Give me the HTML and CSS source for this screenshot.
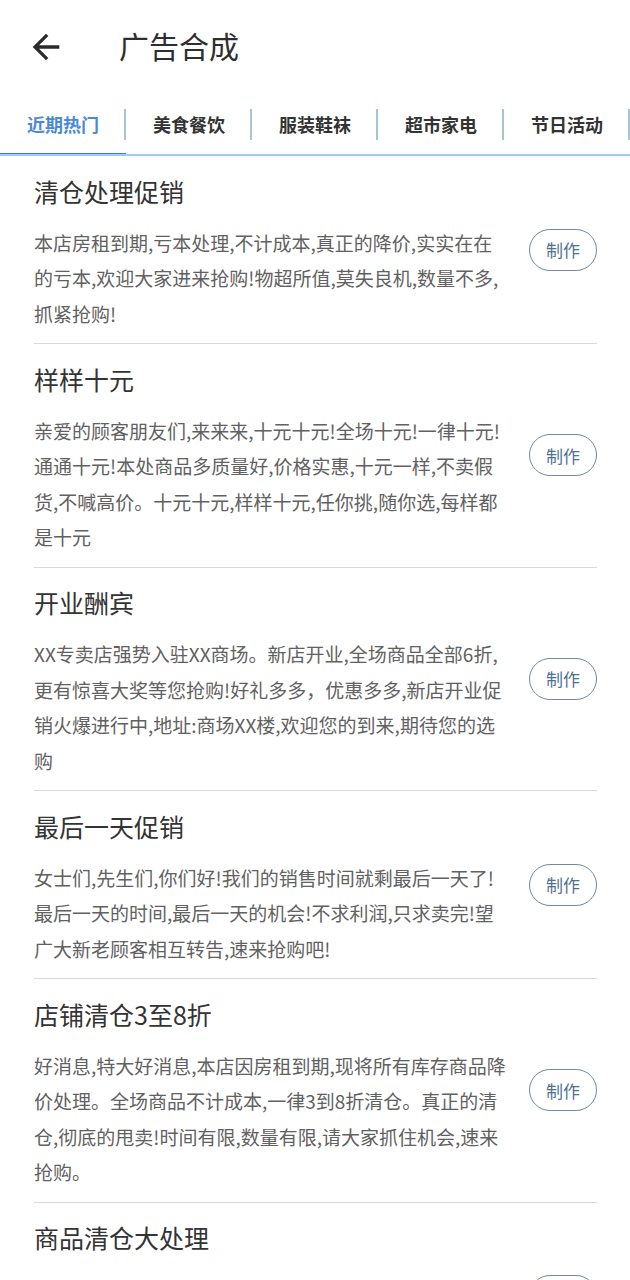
FILE: index.html
```html
<!DOCTYPE html>
<html lang="zh">
<head>
<meta charset="utf-8">
<title>广告合成</title>
<link rel="stylesheet" href="styles.css">
</head>
<body>
<div class="page">
  <header class="header">
    <svg class="back" viewBox="0 0 24 24" width="40" height="40"><path d="M20 11H7.83l5.59-5.59L12 4l-8 8 8 8 1.41-1.41L7.83 13H20v-2z" fill="#2b2b2b"/></svg>
    <h1 class="title">广告合成</h1>
  </header>
  <nav class="tabs">
    <div class="tab active">近期热门</div>
    <div class="tab">美食餐饮</div>
    <div class="tab">服装鞋袜</div>
    <div class="tab">超市家电</div>
    <div class="tab">节日活动</div>
    <div class="tab">婚庆喜事</div>
  </nav>
  <main class="list">
    <div class="item">
      <div class="body">
        <div class="name">清仓处理促销</div>
        <p class="desc">本店房租到期,亏本处理,不计成本,真正的降价,实实在在的亏本,欢迎大家进来抢购!物超所值,莫失良机,数量不多,抓紧抢购!</p>
      </div>
      <button class="make">制作</button>
    </div>
    <div class="item">
      <div class="body">
        <div class="name">样样十元</div>
        <p class="desc">亲爱的顾客朋友们,来来来,十元十元!全场十元!一律十元!通通十元!本处商品多质量好,价格实惠,十元一样,不卖假货,不喊高价。十元十元,样样十元,任你挑,随你选,每样都是十元</p>
      </div>
      <button class="make">制作</button>
    </div>
    <div class="item">
      <div class="body">
        <div class="name">开业酬宾</div>
        <p class="desc">XX专卖店强势入驻XX商场。新店开业,全场商品全部6折,更有惊喜大奖等您抢购!好礼多多，优惠多多,新店开业促销火爆进行中,地址:商场XX楼,欢迎您的到来,期待您的选购</p>
      </div>
      <button class="make">制作</button>
    </div>
    <div class="item">
      <div class="body">
        <div class="name">最后一天促销</div>
        <p class="desc">女士们,先生们,你们好!我们的销售时间就剩最后一天了!最后一天的时间,最后一天的机会!不求利润,只求卖完!望广大新老顾客相互转告,速来抢购吧!</p>
      </div>
      <button class="make">制作</button>
    </div>
    <div class="item">
      <div class="body">
        <div class="name">店铺清仓3至8折</div>
        <p class="desc">好消息,特大好消息,本店因房租到期,现将所有库存商品降价处理。全场商品不计成本,一律3到8折清仓。真正的清仓,彻底的甩卖!时间有限,数量有限,请大家抓住机会,速来抢购。</p>
      </div>
      <button class="make">制作</button>
    </div>
    <div class="item">
      <div class="body">
        <div class="name">商品清仓大处理</div>
        <p class="desc">本店商品清仓大处理,全场一律清仓甩卖,本店商品全部低价处理,先到先得,售完即止,欢迎广大新老顾客前来选购,机会难得,错过不再!</p>
      </div>
      <button class="make">制作</button>
    </div>
  </main>
</div>
</body>
</html>
```

FILE: styles.css
```css
html, body {
  margin: 0;
  padding: 0;
  background: #ffffff;
}

body {
  font-family: "Noto Sans CJK SC", "Noto Sans", "Liberation Sans", sans-serif;
  color: #333333;
  width: 630px;
  height: 1280px;
  overflow: hidden;
}

.page {
  width: 630px;
}

.header {
  height: 94px;
  display: flex;
  align-items: center;
}

.back {
  margin-left: 26px;
  flex: 0 0 auto;
}

.title {
  margin: -5px 0 0 53px;
  font-size: 30px;
  font-weight: 400;
  color: #2e2e2e;
  line-height: 40px;
}

.tabs {
  height: 60px;
  display: flex;
  overflow: hidden;
  border-bottom: 2px solid #a3cbf0;
}

.tab {
  flex: 0 0 126px;
  position: relative;
  display: flex;
  align-items: center;
  justify-content: center;
  font-size: 18px;
  font-weight: 700;
  color: #333333;
}

.tab::after {
  content: "";
  position: absolute;
  right: 0;
  top: 15px;
  width: 2px;
  height: 31px;
  background: #a9c3db;
}

.tab.active {
  color: #4a88d8;
}

.tab.active::before {
  content: "";
  position: absolute;
  left: 0;
  right: 0;
  bottom: -2px;
  height: 3px;
  background: #3d7fd6;
}

.list {
  padding: 0 33px 0 34px;
}

.item {
  display: flex;
  align-items: center;
  border-bottom: 1px solid #d9d9d9;
}

.body {
  flex: 0 0 475px;
  width: 475px;
  margin-right: 20px;
  min-width: 0;
}

.name {
  padding-top: 16.5px;
  font-size: 25px;
  line-height: 36px;
  color: #333333;
}

.desc {
  margin: 16px 0 0 0;
  padding-bottom: 12px;
  font-size: 19px;
  line-height: 35.5px;
  color: #616161;
}

.make {
  flex: 0 0 68px;
  width: 68px;
  height: 42px;
  padding: 0;
  border: 1.5px solid #74889a;
  border-radius: 21px;
  background: #ffffff;
  color: #4e7190;
  font-family: "Noto Sans CJK SC", "Noto Sans", sans-serif;
  font-size: 17px;
}
```
